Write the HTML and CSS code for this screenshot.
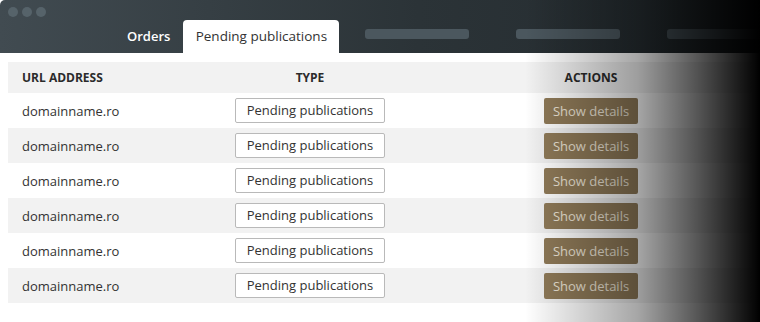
FILE: index.html
```html
<!DOCTYPE html>
<html lang="en">
<head>
    <meta charset="UTF-8">
    <meta name="viewport" content="width=device-width, initial-scale=1.0">
    <title>Pending publications</title>
    <link rel="stylesheet" href="styles.css">
</head>
<body>
    <div class="window">
        <div class="topbar">
            <div class="dots">
                <span></span><span></span><span></span>
            </div>
            <div class="tabs">
                <a class="tab" href="#">Orders</a>
                <a class="tab active" href="#">Pending publications</a>
                <span class="placeholder"></span>
                <span class="placeholder"></span>
                <span class="placeholder"></span>
            </div>
        </div>
        <div class="content">
            <div class="table">
                <div class="row head">
                    <div class="cell url">URL ADDRESS</div>
                    <div class="cell center">TYPE</div>
                    <div class="cell center">ACTIONS</div>
                    <div class="cell"></div>
                </div>
                <div class="row">
                    <div class="cell url">domainname.ro</div>
                    <div class="cell center"><span class="type">Pending publications</span></div>
                    <div class="cell center"><a class="btn" href="#">Show details</a></div>
                    <div class="cell"></div>
                </div>
                <div class="row">
                    <div class="cell url">domainname.ro</div>
                    <div class="cell center"><span class="type">Pending publications</span></div>
                    <div class="cell center"><a class="btn" href="#">Show details</a></div>
                    <div class="cell"></div>
                </div>
                <div class="row">
                    <div class="cell url">domainname.ro</div>
                    <div class="cell center"><span class="type">Pending publications</span></div>
                    <div class="cell center"><a class="btn" href="#">Show details</a></div>
                    <div class="cell"></div>
                </div>
                <div class="row">
                    <div class="cell url">domainname.ro</div>
                    <div class="cell center"><span class="type">Pending publications</span></div>
                    <div class="cell center"><a class="btn" href="#">Show details</a></div>
                    <div class="cell"></div>
                </div>
                <div class="row">
                    <div class="cell url">domainname.ro</div>
                    <div class="cell center"><span class="type">Pending publications</span></div>
                    <div class="cell center"><a class="btn" href="#">Show details</a></div>
                    <div class="cell"></div>
                </div>
                <div class="row">
                    <div class="cell url">domainname.ro</div>
                    <div class="cell center"><span class="type">Pending publications</span></div>
                    <div class="cell center"><a class="btn" href="#">Show details</a></div>
                    <div class="cell"></div>
                </div>
            </div>
        </div>
        <div class="fade"></div>
    </div>
</body>
</html>
```

FILE: styles.css
```css
html, body {
    margin: 0;
    background-color: #ffffff;
}
body {
    font-family: "Open Sans", Arial, sans-serif;
    color: #333333;
}
.window {
    position: relative;
    width: 760px;
    height: 322px;
    overflow: hidden;
    border-top-left-radius: 5px;
}
.topbar {
    height: 53px;
    box-sizing: border-box;
    padding-left: 8px;
    background: linear-gradient(to right, #414b51, #2b3337 55%, #232a2e);
    display: flex;
    flex-direction: column;
    justify-content: space-between;
}
.dots {
    display: flex;
    gap: 4px;
    padding-top: 7px;
}
.dots span {
    width: 10px;
    height: 10px;
    border-radius: 50%;
    background-color: #56636a;
}
.tabs {
    display: flex;
    align-items: flex-end;
    padding-left: 110px;
}
.tab {
    display: block;
    flex-shrink: 0;
    white-space: nowrap;
    height: 33px;
    line-height: 32px;
    padding: 0 13px 0 9px;
    font-size: 13px;
    font-weight: 600;
    color: #ffffff;
    text-decoration: none;
}
.tab.active {
    width: 156px;
    box-sizing: border-box;
    padding: 0;
    text-align: center;
    font-weight: 400;
    font-size: 13.5px;
    color: #333333;
    background-color: #ffffff;
    border-radius: 4px 4px 0 0;
    margin-right: 26px;
}
.placeholder {
    width: 104px;
    height: 10px;
    border-radius: 3px;
    background-color: #4b575e;
    margin: 0 47px 14px 0;
    flex-shrink: 0;
}
.content {
    padding: 9px 8px 0;
}
.row {
    display: grid;
    grid-template-columns: 152px 300px 262px 1fr;
    height: 35px;
    align-items: center;
    font-size: 13px;
}
.row:nth-child(odd) {
    background-color: #f2f2f2;
}
.row.head {
    height: 31px;
    font-size: 12px;
    font-weight: 700;
    color: #2b2b2b;
}
.cell.url {
    padding-left: 14px;
}
.cell.center {
    display: flex;
    justify-content: center;
}
.type {
    display: block;
    width: 150px;
    height: 25px;
    line-height: 23px;
    box-sizing: border-box;
    border: 1px solid #b9b9b9;
    border-radius: 2px;
    background-color: #ffffff;
    text-align: center;
    color: #333333;
}
.btn {
    display: block;
    width: 94px;
    height: 26px;
    line-height: 26px;
    border-radius: 2px;
    background-color: #8f7a58;
    color: #ece4d6;
    text-align: center;
    text-decoration: none;
}
.fade {
    position: absolute;
    top: 0;
    right: 0;
    width: 235px;
    height: 100%;
    background: linear-gradient(to right, rgba(0, 0, 0, 0), rgba(0, 0, 0, 0.35) 48%, rgba(0, 0, 0, 0.67) 74%, rgba(0, 0, 0, 1));
    pointer-events: none;
}
```
